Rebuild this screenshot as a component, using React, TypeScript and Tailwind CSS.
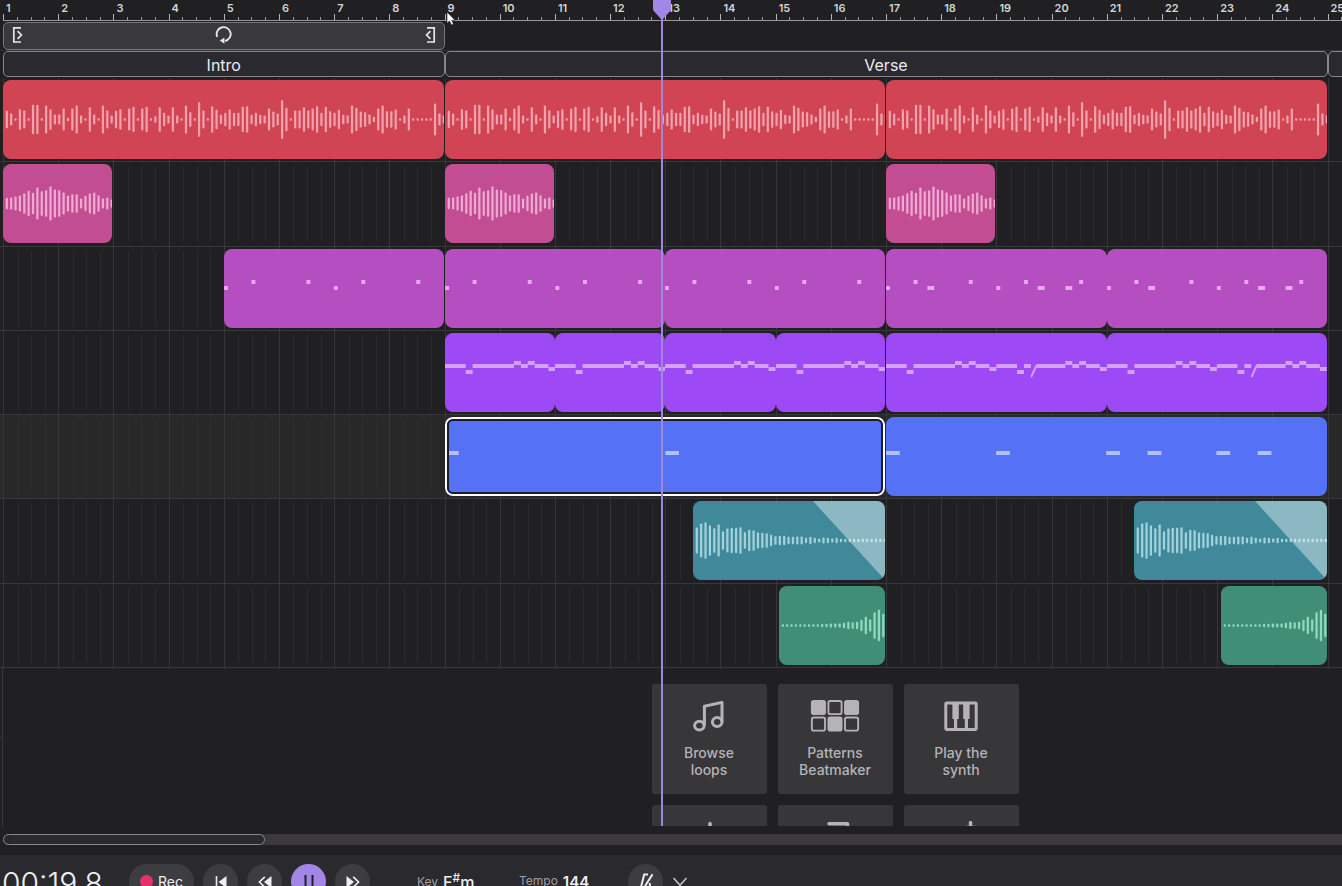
import { type FC, type ReactNode } from 'react'
import { clsx } from 'clsx'

const BARS = 32
const STEPS = 16 // steps per bar
const LABELLED_BARS = 25

// [start, length, top, height] - start and length in bars
type Note = [number, number, number, number]

interface ClipData {
  start: number
  bars: number
  joined?: boolean
  selected?: boolean
  wave?: number[]
  notes?: Note[]
  slide?: boolean
  fade?: boolean
}

interface Track {
  name: string
  color: string
  ink: string
  selected?: boolean
  clips: ClipData[]
}

// Half heights of the waveform bars, in thirds of a pixel
const drumWave = [
  26, 18, 4, 31, 27, 4, 44, 44, 4, 42, 31, 15, 15, 33, 5, 33, 42, 12, 4, 37, 15,
  4, 42, 27, 12, 26, 31, 4, 33, 38, 4, 33, 38, 4, 10, 37, 20, 12, 37, 12, 4, 42,
  22, 4, 52, 27, 4, 40, 29, 14, 20, 30, 20, 20, 38, 40, 14, 20, 14, 12, 33, 24,
  18, 58, 35, 4, 27, 27, 37, 27, 33, 40, 20, 38, 25, 20, 29, 14, 12, 42, 35, 24,
  22, 15, 8, 33, 42, 25, 25, 30, 4, 12, 33, 4, 4, 4, 4, 4, 48, 18, 12,
]
const vocalWave = [
  17, 18, 21, 24, 31, 38, 32, 48, 37, 40, 51, 42, 40, 33, 24, 28, 28, 15, 23, 30,
  33, 25, 15, 18, 12,
]
const decayWave = [
  39, 51, 55, 46, 37, 48, 28, 36, 38, 38, 40, 25, 32, 31, 24, 23, 22, 17, 13, 14,
  14, 11, 11, 12, 12, 8, 11, 8, 6, 9, 8, 6, 8, 5, 5, 5, 5, 5, 5, 5, 5, 5, 5, 5,
]
const riserWave = [
  4, 4, 4, 4, 4, 4, 4, 4, 4, 5, 5, 6, 6, 6, 8, 11, 10, 11, 17, 26, 18, 40, 47, 35,
]

const S = 1 / 14
const bassNotes: Note[] = [
  [0, S, 37, 4],
  [0.5, S, 31, 4],
  [1.5, S, 31, 4],
  [2, S, 37, 4],
  [2.5, S, 31, 4],
  [3.5, S, 31, 4],
]
const bassFill: Note[] = [
  ...bassNotes,
  [0.75, 0.125, 37, 4],
  [2.75, 0.125, 37, 4],
  [3.25, 0.125, 37, 4],
]

const leadTail = (at: number): Note[] => [
  [at + 1.25, 0.125, 28, 4],
  [at + 1.375, 0.125, 31, 4],
  [at + 1.5, 0.125, 28, 4],
  [at + 1.625, 0.25, 31, 4],
  [at + 1.875, 0.125, 34, 4],
]
const lead: Note[] = [
  [0, 0.375, 31, 4],
  [0.375, 0.125, 37, 4],
  [0.5, 0.75, 31, 4],
  ...leadTail(0),
]
const leadLong: Note[] = [
  ...lead,
  [2, 0.375, 31, 4],
  [2.375, 0.125, 37, 4],
  [2.5, 0.125, 31, 4],
  [2.73, 0.52, 31, 4],
  ...leadTail(2),
]

const pad = (starts: number[]): Note[] => starts.map((s) => [s, 0.25, 34, 4])

const tracks: Track[] = [
  {
    name: 'Drums',
    color: 'bg-[#d04453]',
    ink: 'text-[#f0a3ac]',
    clips: [
      { start: 0, bars: 8, wave: drumWave },
      { start: 8, bars: 8, wave: drumWave },
      { start: 16, bars: 8, wave: drumWave },
    ],
  },
  {
    name: 'Vocals',
    color: 'bg-[#c34d92]',
    ink: 'text-[#eeaad3]',
    clips: [
      { start: 0, bars: 2, wave: vocalWave },
      { start: 8, bars: 2, wave: vocalWave },
      { start: 16, bars: 2, wave: vocalWave },
    ],
  },
  {
    name: 'Bass',
    color: 'bg-[#b54fc1]',
    ink: 'text-[#e7a9ec]',
    clips: [
      { start: 4, bars: 4, notes: bassNotes },
      { start: 8, bars: 4, notes: bassNotes, joined: true },
      { start: 12, bars: 4, notes: bassNotes },
      { start: 16, bars: 4, notes: bassFill, joined: true },
      { start: 20, bars: 4, notes: bassFill },
    ],
  },
  {
    name: 'Lead',
    color: 'bg-[#9e49f6]',
    ink: 'text-[#d2a2f8]',
    clips: [
      { start: 8, bars: 2, notes: lead, joined: true },
      { start: 10, bars: 2, notes: lead, joined: true },
      { start: 12, bars: 2, notes: lead, joined: true },
      { start: 14, bars: 2, notes: lead },
      { start: 16, bars: 4, notes: leadLong, slide: true, joined: true },
      { start: 20, bars: 4, notes: leadLong, slide: true },
    ],
  },
  {
    name: 'Pads',
    color: 'bg-[#5571f5]',
    ink: 'text-[#b3bffa]',
    selected: true,
    clips: [
      { start: 8, bars: 8, notes: pad([0, 4]), selected: true },
      { start: 16, bars: 8, notes: pad([0, 2, 4, 4.75, 6, 6.75]) },
    ],
  },
  {
    name: 'Crash',
    color: 'bg-[#40899b]',
    ink: 'text-[#a3d2dd]',
    clips: [
      { start: 12.5, bars: 3.5, wave: decayWave, fade: true },
      { start: 20.5, bars: 3.5, wave: decayWave, fade: true },
    ],
  },
  {
    name: 'Riser',
    color: 'bg-[#408e75]',
    ink: 'text-[#90dbc0]',
    clips: [
      { start: 14.0625, bars: 1.9375, wave: riserWave },
      { start: 22.0625, bars: 1.9375, wave: riserWave },
    ],
  },
]

const sections = [
  { name: 'Intro', bars: 8 },
  { name: 'Verse', bars: 16 },
  { name: '', bars: 8 },
]

const barGrid = {
  gridTemplateColumns: `repeat(${BARS * STEPS}, minmax(0, 1fr))`,
}

const placeAt = (start: number, bars: number) => ({
  gridColumn: `${start * STEPS + 1} / span ${bars * STEPS}`,
})

const Wave: FC<{ data: number[] }> = ({ data }) => (
  <svg className="h-full w-full" aria-hidden="true">
    {data.map((h, i) => (
      <rect
        key={i}
        x={2.7 + i * 4.37}
        y={39.5 - h / 3}
        width="2.2"
        height={(h * 2) / 3}
        rx="0.8"
        fill="currentColor"
      />
    ))}
  </svg>
)

const Notes: FC<{ clip: ClipData }> = ({ clip }) => (
  <svg
    className="h-full w-full"
    viewBox={`0 0 ${clip.bars * 100} 79`}
    preserveAspectRatio="none"
    aria-hidden="true"
  >
    {clip.notes?.map(([start, length, y, h], i) => (
      <rect
        key={i}
        x={start * 100}
        y={y}
        width={length * 100}
        height={h}
        fill="currentColor"
      />
    ))}
    {clip.slide && (
      <path
        d="M263 44 273 32"
        stroke="currentColor"
        strokeWidth="3"
        fill="none"
      />
    )}
  </svg>
)

const Clip: FC<{ clip: ClipData; track: Track }> = ({ clip, track }) => (
  <div
    className={clsx(
      'relative h-[79px] overflow-hidden rounded-lg',
      track.color,
      track.ink,
      !clip.joined && 'mr-px',
    )}
    style={placeAt(clip.start, clip.bars)}
  >
    {clip.wave && <Wave data={clip.wave} />}
    {clip.notes && <Notes clip={clip} />}
    {clip.fade && (
      <svg
        className="absolute top-0 right-0 h-full w-[72px] text-white/40"
        viewBox="0 0 72 79"
        aria-hidden="true"
      >
        <path d="M0 0H72V79Z" fill="currentColor" />
      </svg>
    )}
    {clip.selected && (
      <div className="absolute inset-0 rounded-lg border-2 border-white">
        <div className="h-full rounded-md border-2 border-[#1d1d2b]" />
      </div>
    )}
  </div>
)

const GridLines: FC = () => (
  <div className="absolute inset-0 flex">
    {Array.from({ length: BARS }, (_, bar) => (
      <div
        key={bar}
        className="grid flex-1 grid-cols-4 border-l border-[#363638] py-1"
      >
        <span />
        <span className="border-l border-[#2c2c2e]" />
        <span className="border-l border-[#2c2c2e]" />
        <span className="border-l border-[#2c2c2e]" />
      </div>
    ))}
  </div>
)

const Ruler: FC = () => (
  <div className="h-[22px] pl-[3px]">
    <div className="flex h-[21px] w-[1766px] border-b border-[#97979a]">
      {Array.from({ length: BARS }, (_, bar) => (
        <div key={bar} className="relative flex flex-1 items-end">
          {bar < LABELLED_BARS && (
            <span className="absolute top-0 left-[3px] text-[11px] leading-[17px] font-semibold text-[#d4d4d6]">
              {bar + 1}
            </span>
          )}
          <span className="h-[6px] flex-1 border-l border-[#b5b5b8]" />
          <span className="h-[3px] flex-1 border-l border-[#97979a]" />
          <span className="h-[3px] flex-1 border-l border-[#97979a]" />
          <span className="h-[3px] flex-1 border-l border-[#97979a]" />
        </div>
      ))}
    </div>
  </div>
)

const LoopBar: FC = () => (
  <div className="h-[29px] border-b border-[#343438] pl-[3px]">
    <div className="grid h-full w-[1766px]" style={barGrid}>
      <div
        className="flex items-center justify-between rounded-[5px] border border-[#77777b] bg-[#39393b] px-2 pb-[2px] text-[#e6e6e8]"
        style={placeAt(0, 8)}
      >
        <svg className="h-4 w-[11px]" viewBox="0 0 11 16" fill="none">
          <path
            d="M9 .9H1.8V15H9M5.6 4.2 9.4 8 5.6 11.8"
            stroke="currentColor"
            strokeWidth="1.7"
          />
        </svg>
        <svg className="h-[18px] w-[18px]" viewBox="0 0 18 18" fill="none">
          <path
            d="M2.2 10.8A7 7 0 1 1 10 15"
            stroke="currentColor"
            strokeWidth="1.9"
          />
          <path d="M9.4 11.6v6.2L4.8 14.6z" fill="currentColor" />
        </svg>
        <svg className="h-4 w-[11px]" viewBox="0 0 11 16" fill="none">
          <path
            d="M2 .9H9.2V15H2M5.4 4.2 1.6 8 5.4 11.8"
            stroke="currentColor"
            strokeWidth="1.7"
          />
        </svg>
      </div>
    </div>
  </div>
)

const Sections: FC = () => (
  <div className="h-[26px] pl-[3px]">
    <div className="flex h-full w-[1766px]">
      {sections.map((section) => (
        <div
          key={section.bars + section.name}
          className="flex items-center justify-center rounded-[5px] border border-[#85858a] bg-[#2a2930] pt-[2px] text-base text-[#ececee]"
          style={{ width: `${(section.bars / BARS) * 100}%` }}
        >
          {section.name}
        </div>
      ))}
    </div>
  </div>
)

const NoteIcon: FC = () => (
  <svg className="h-8 w-8" viewBox="0 0 32 32" fill="none">
    <g stroke="currentColor" strokeWidth="3" strokeLinejoin="round">
      <ellipse cx="6.4" cy="25.6" rx="4.8" ry="4.4" />
      <ellipse cx="24.2" cy="22" rx="4.8" ry="4.4" />
      <path d="M11.4 25.6V6.2L29 2.4V22" />
    </g>
  </svg>
)

const BeatIcon: FC = () => (
  <svg className="h-8 w-[52px]" viewBox="0 0 52 34" fill="none">
    {[0, 1, 2, 3, 4, 5].map((i) => (
      <rect
        key={i}
        x={1.4 + (i % 3) * 17.6}
        y={i < 3 ? 1 : 18.6}
        width="14"
        height="14"
        rx="2"
        stroke="currentColor"
        strokeWidth="2"
        fill={i % 2 === 0 ? 'currentColor' : 'none'}
      />
    ))}
  </svg>
)

const KeysIcon: FC = () => (
  <svg className="h-8 w-[34px]" viewBox="0 0 34 32" fill="none">
    <rect
      x="1.8"
      y="3"
      width="30.4"
      height="26.4"
      rx="0.8"
      stroke="currentColor"
      strokeWidth="3"
    />
    <path
      d="M8.4 3h6.4v16h-1.6v10h-3.2V19H8.4zM19.2 3h6.4v16H24v10h-3.2V19h-1.6z"
      fill="currentColor"
    />
  </svg>
)

const MicIcon: FC = () => (
  <svg className="h-8 w-8" viewBox="0 0 32 32" fill="none">
    <path
      d="M17 2.5V22M9 15l8 8 8-8M5 29h24"
      stroke="currentColor"
      strokeWidth="3.6"
      strokeLinecap="round"
    />
  </svg>
)

const FileIcon: FC = () => (
  <svg className="h-8 w-8" viewBox="0 0 32 32" fill="none">
    <path
      d="M10 2.8H28.5V24"
      stroke="currentColor"
      strokeWidth="3.6"
      strokeLinecap="round"
      strokeLinejoin="round"
    />
  </svg>
)

const SparkIcon: FC = () => (
  <svg className="h-8 w-8" viewBox="0 0 32 32" fill="none">
    <path
      d="M25.5 1.5V10M21 6.4h9M12 10v18M4 19h16"
      stroke="currentColor"
      strokeWidth="3.4"
      strokeLinecap="round"
    />
  </svg>
)

const PadButton: FC<{ icon: ReactNode; lines?: string[]; label: string }> = ({
  icon,
  lines = [],
  label,
}) => (
  <button
    type="button"
    aria-label={label}
    className="flex h-[110px] w-[115px] flex-col items-center rounded-[3px] bg-[#373639] pt-4 text-[#b5b3b7]"
  >
    {icon}
    <span className="mt-3 text-sm leading-[17px] font-medium">
      {lines.map((line) => (
        <span key={line} className="block">
          {line}
        </span>
      ))}
    </span>
  </button>
)

const Playhead: FC = () => (
  <div className="pointer-events-none absolute inset-y-0 right-0 left-[3px]">
    <div className="relative h-full w-[1766px]">
      <div
        className="absolute inset-y-0 w-[2px] bg-[#a087dc]"
        style={{ left: `${(11.92 / BARS) * 100}%` }}
      >
        <svg
          className="absolute top-0 -left-2 h-5 w-[18px]"
          viewBox="0 0 18 20"
          aria-hidden="true"
        >
          <path
            d="M0 0H18V8.5Q18 10 17 11.2L9 20 1 11.2Q0 10 0 8.5Z"
            fill="#a287e6"
          />
        </svg>
      </div>
      <svg
        className="absolute top-[11px] h-4 w-3"
        style={{ left: `${(8.02 / BARS) * 100}%` }}
        viewBox="0 0 12 16"
        aria-hidden="true"
      >
        <path
          d="M1 1V12.2L3.6 10 5.4 14 7.4 13 5.7 9.2H9Z"
          fill="#fff"
          stroke="#222"
          strokeWidth="0.6"
        />
      </svg>
    </div>
  </div>
)

const RoundButton: FC<{
  label: string
  active?: boolean
  children: ReactNode
}> = ({ label, active, children }) => (
  <button
    type="button"
    aria-label={label}
    className={clsx(
      'flex size-[35px] shrink-0 items-center justify-center rounded-full',
      active ? 'bg-[#a286e6] text-[#222026]' : 'bg-[#3d3c40] text-[#efeff1]',
    )}
  >
    {children}
  </button>
)

const Transport: FC = () => (
  <footer className="h-[31px] shrink-0 overflow-hidden bg-[#2a292e] pt-[9px] pl-[2px]">
    <div className="flex h-[35px] items-center gap-[9px] whitespace-nowrap">
      <span className="w-[118px] shrink-0 pt-1 text-[30px] leading-[35px] font-light text-[#efeff1]">
        00:19.8
      </span>
      <button
        type="button"
        className="flex h-[35px] w-[65px] shrink-0 items-center gap-[5px] rounded-full bg-[#3d3c40] pl-[11px] text-sm text-[#efeff1]"
      >
        <span className="size-[13px] rounded-full bg-[#e5326c]" />
        Rec
      </button>
      <RoundButton label="Back to start">
        <svg className="h-[14px] w-3" viewBox="0 0 12 14" fill="none">
          <path d="M1.5 1v12" stroke="currentColor" strokeWidth="1.6" />
          <path d="M11.5 1v12L3.5 7z" fill="currentColor" />
        </svg>
      </RoundButton>
      <RoundButton label="Rewind">
        <svg className="h-[14px] w-[14px]" viewBox="0 0 14 14" fill="none">
          <path d="M6.8 1.8 1.4 7l5.4 5.2" stroke="currentColor" strokeWidth="1.6" />
          <path d="M13.5 1v12L6 7z" fill="currentColor" />
        </svg>
      </RoundButton>
      <RoundButton label="Pause" active>
        <svg className="h-[14px] w-[10px]" viewBox="0 0 10 14" fill="none">
          <path d="M1.5 0v14M8.5 0v14" stroke="currentColor" strokeWidth="2" />
        </svg>
      </RoundButton>
      <RoundButton label="Fast forward">
        <svg className="h-[14px] w-[14px]" viewBox="0 0 14 14" fill="none">
          <path d="M7.2 1.8 12.6 7l-5.4 5.2" stroke="currentColor" strokeWidth="1.6" />
          <path d="M.5 1v12L8 7z" fill="currentColor" />
        </svg>
      </RoundButton>
      <span className="ml-[38px] flex w-[93px] shrink-0 items-center gap-[5px] text-xs text-[#a09fa4]">
        Key
        <span className="text-base font-medium text-[#efeff1]">
          F<sup className="text-xs">#</sup>m
        </span>
      </span>
      <span className="flex w-[100px] shrink-0 items-center gap-[5px] text-xs text-[#a09fa4]">
        Tempo
        <span className="text-[15px] font-semibold text-[#efeff1]">144</span>
      </span>
      <RoundButton label="Metronome">
        <svg className="h-[18px] w-4" viewBox="0 0 16 18" fill="none">
          <path
            d="M10 1.6H6.2L2.6 15.5h9.8L11.6 10M14.6 1.2 7 13"
            stroke="currentColor"
            strokeWidth="2"
          />
        </svg>
      </RoundButton>
      <button type="button" aria-label="Metronome options">
        <svg className="h-[10px] w-4" viewBox="0 0 16 10" fill="none">
          <path
            d="m1.5 1 6.5 7.2L14.5 1"
            stroke="#c5c4c8"
            strokeWidth="1.6"
          />
        </svg>
      </button>
    </div>
  </footer>
)

const App: FC = () => {
  return (
    <div className="flex h-screen flex-col overflow-hidden bg-[#202022] font-['Inter',sans-serif]">
      <main className="relative min-h-0 flex-1 overflow-hidden">
        <Ruler />
        <LoopBar />
        <Sections />

        {/* Tracks */}
        <div className="mt-px grid h-[590px] grid-rows-7">
          {tracks.map((track) => (
            <section
              key={track.name}
              aria-label={track.name}
              className={clsx(
                'border-b border-[#38383a] pl-[3px]',
                track.selected && 'bg-[#282829]',
              )}
            >
              <div className="relative h-full w-[1766px]">
                <GridLines />
                <div className="grid pt-[2px]" style={barGrid}>
                  {track.clips.map((clip) => (
                    <Clip key={clip.start} clip={clip} track={track} />
                  ))}
                </div>
              </div>
            </section>
          ))}
        </div>

        {/* Add track */}
        <div className="flex h-full">
          <div className="flex w-[3px] flex-col border-r border-[#39393b]">
            <span className="h-[70px] border-b border-[#39393b]" />
          </div>
          <div className="flex flex-1 justify-center pt-4 pl-[325px]">
            <div className="grid grid-cols-3 content-start gap-[11px]">
              <PadButton
                label="Browse loops"
                icon={<NoteIcon />}
                lines={['Browse', 'loops']}
              />
              <PadButton
                label="Patterns Beatmaker"
                icon={<BeatIcon />}
                lines={['Patterns', 'Beatmaker']}
              />
              <PadButton
                label="Play the synth"
                icon={<KeysIcon />}
                lines={['Play the', 'synth']}
              />
              <PadButton label="Record" icon={<MicIcon />} />
              <PadButton label="Import" icon={<FileIcon />} />
              <PadButton label="Create" icon={<SparkIcon />} />
            </div>
          </div>
        </div>

        <Playhead />
      </main>

      {/* Horizontal scroll */}
      <div className="shrink-0 pt-2 pb-[10px] pl-[3px]">
        <div className="h-[11px] rounded-l-full bg-[#3c393e]">
          <div className="h-full w-[262px] rounded-full border border-[#88868b] bg-[#2a292e]" />
        </div>
      </div>

      <Transport />
    </div>
  )
}

export default App
